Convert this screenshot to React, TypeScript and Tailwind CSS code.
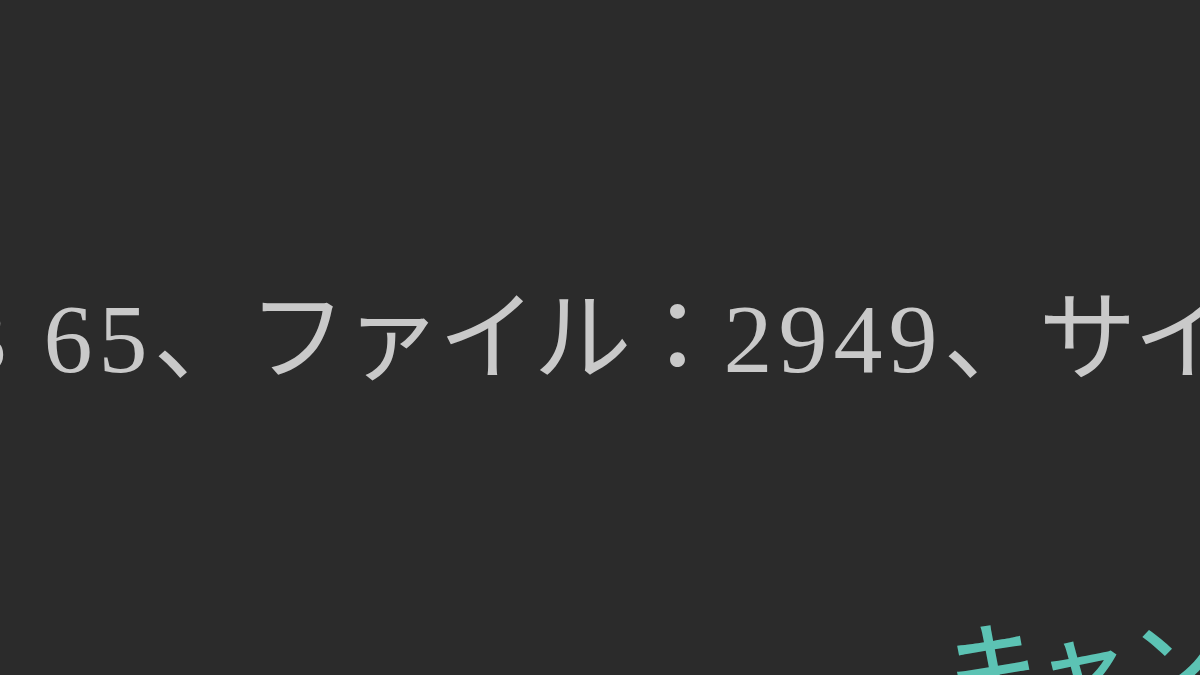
export default function App() {
  return (
    <div className="w-[1200px] h-[675px] overflow-hidden bg-[#2b2b2b] flex flex-col">
      {/* summary line */}
      <div className="pt-[290px] overflow-hidden">
        <p
          className="ml-[-42px] whitespace-nowrap text-[98px] leading-none text-[#c9c9c9]"
          style={{ fontFamily: '"Liberation Serif", "Noto Sans CJK JP", serif' }}
        >
          <span className="tracking-[6px]">3 65</span>
          <span className="tracking-[-3px]">、ファイル：</span>
          <span className="tracking-[6px]">2949</span>
          <span className="tracking-[-3px]">、サイズ：</span>
          <span className="tracking-[6px]">1.8 GB</span>
        </p>
      </div>

      {/* dialog actions */}
      <div className="mt-auto flex justify-start overflow-hidden">
        <button
          className="ml-[948px] mb-[-28px] shrink-0 whitespace-nowrap text-[90px] leading-none font-medium text-[#5cc3b4]"
          style={{ fontFamily: '"Noto Sans CJK JP", sans-serif' }}
        >
          キャンセル
        </button>
      </div>
    </div>
  )
}
